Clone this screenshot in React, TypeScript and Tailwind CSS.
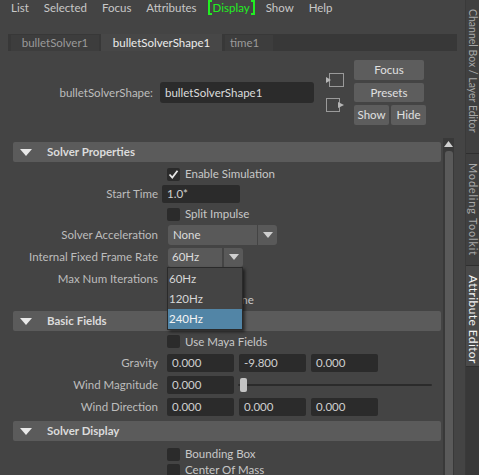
import React from 'react';

function Check({ checked, label }: { checked?: boolean; label: string }) {
  return (
    <div className="flex items-center ml-[9px]">
      <div className="w-[13px] h-[13px] rounded-[2px] bg-[#2b2b2b] flex items-center justify-center">
        {checked && (
          <svg width="11" height="11" viewBox="0 0 11 11">
            <polyline points="1.5,5.5 4.3,8.5 9.5,1.8" fill="none" stroke="#e6e6e6" strokeWidth="1.8" />
          </svg>
        )}
      </div>
      <span className="ml-[5px] text-[#c8c8c8]">{label}</span>
    </div>
  );
}

function Row({ label, h, children }: { label?: string; h: string; children?: React.ReactNode }) {
  return (
    <div className={`flex items-center ${h}`}>
      <div className="w-[145px] shrink-0 text-right text-[#bdbdbd]">{label}</div>
      {children}
    </div>
  );
}

function Field({ value, w }: { value?: string; w: string }) {
  return (
    <div className={`h-[18px] ${w} rounded-[2px] bg-[#2b2b2b] text-[#cfcfcf] pl-[5px] flex items-center`}>
      {value}
    </div>
  );
}

function Arrow() {
  return (
    <svg width="10" height="6" viewBox="0 0 10 6">
      <polygon points="0,0 10,0 5,6" fill="#cfcfcf" />
    </svg>
  );
}

function Header({ title }: { title: string }) {
  return (
    <div className="h-[20px] rounded-[2px] bg-[#5b5b5b] flex items-center">
      <svg width="12" height="7" viewBox="0 0 12 7" className="ml-[7px]">
        <polygon points="0,0 12,0 6,7" fill="#e8e8e8" />
      </svg>
      <span className="ml-[15px] font-bold text-[#dcdcdc]">{title}</span>
    </div>
  );
}

function SideTab({ children, active, h }: { children: React.ReactNode; active?: boolean; h: string }) {
  return (
    <div
      className={`${h} border-b border-[#2f2f2f] flex justify-center pt-[9px] ${
        active ? 'bg-[#4a4a4a] text-[#f4f4f4]' : 'bg-[#404040] text-[#a8a8a8]'
      }`}
    >
      {children}
    </div>
  );
}

export default function App() {
  return (
    <div className="relative w-[479px] h-[475px] overflow-hidden bg-[#444444] flex font-['Lato',sans-serif] text-[11.5px] leading-[14px]">
      {/* main editor column */}
      <div className="w-[465px] shrink-0 flex flex-col">
        {/* menu bar */}
        <div className="h-[17px] flex items-center gap-[15px] pl-[11px] text-[11.5px] text-[#c8c8c8]">
          <span>List</span>
          <span>Selected</span>
          <span>Focus</span>
          <span>Attributes</span>
          <span className="-mx-[4px] flex items-center text-[#22ee22]">
            <span className="w-[4px] h-[15px] border-l-2 border-t-2 border-b-2 border-[#22ee22]" />
            <span className="mx-[1px]">Display</span>
            <span className="w-[4px] h-[15px] border-r-2 border-t-2 border-b-2 border-[#22ee22]" />
          </span>
          <span>Show</span>
          <span>Help</span>
        </div>

        {/* node tabs */}
        <div className="mt-[19px] ml-[8px] w-[449px] h-[18px] bg-[#383838] flex items-end pl-[3px]">
          <div className="w-[88px] h-[16px] bg-[#3d3d3d] text-[#9a9a9a] flex items-center justify-center">bulletSolver1</div>
          <div className="ml-[2px] w-[121px] h-[17px] bg-[#474747] text-[#ececec] flex items-center justify-center">bulletSolverShape1</div>
          <div className="ml-[3px] w-[48px] h-[16px] bg-[#3d3d3d] text-[#9a9a9a] flex items-center pl-[5px]">time1</div>
        </div>

        {/* node name row */}
        <div className="mt-[9px] h-[66px] flex items-center">
          <div className="w-[153px] text-right text-[#bdbdbd]">bulletSolverShape:</div>
          <div className="ml-[7px] w-[154px] h-[21px] rounded-[3px] bg-[#2b2b2b] text-[#dcdcdc] flex items-center pl-[5px]">
            bulletSolverShape1
          </div>
          <div className="ml-[12px] w-[19px] flex flex-col gap-[10px]">
            <svg width="19" height="15" viewBox="0 0 19 15">
              <rect x="3.5" y="0.5" width="14" height="13" fill="none" stroke="#9a9a9a" />
              <polygon points="0,4 5,7 0,10" fill="#b5b5b5" />
            </svg>
            <svg width="19" height="15" viewBox="0 0 19 15">
              <rect x="0.5" y="0.5" width="13" height="13" fill="none" stroke="#9a9a9a" />
              <polygon points="12,4 18,7 12,10" fill="#b5b5b5" />
            </svg>
          </div>
          <div className="ml-[9px] self-start flex flex-col gap-[3px] text-[#e0e0e0]">
            <div className="w-[70px] h-[20px] rounded-[2px] bg-[#5d5d5d] flex items-center justify-center">Focus</div>
            <div className="w-[70px] h-[19px] rounded-[2px] bg-[#5d5d5d] flex items-center justify-center">Presets</div>
            <div className="flex gap-[2px]">
              <div className="w-[35px] h-[20px] rounded-[2px] bg-[#5d5d5d] flex items-center justify-center">Show</div>
              <div className="w-[35px] h-[20px] rounded-[2px] bg-[#5d5d5d] flex items-center justify-center">Hide</div>
            </div>
          </div>
        </div>

        {/* attribute scroll area */}
        <div className="mt-[13px] flex flex-1">
          <div className="ml-[13px] w-[428px] pt-[4px] flex flex-col">
            <Header title="Solver Properties" />
            <div className="pt-[3px] flex flex-col">
              <Row h="h-[18px]">
                <Check checked label="Enable Simulation" />
              </Row>
              <Row label="Start Time" h="h-[21px]">
                <div className="ml-[4px]">
                  <Field value="1.0*" w="w-[78px]" />
                </div>
              </Row>
              <Row h="h-[20px]">
                <Check label="Split Impulse" />
              </Row>
              <Row label="Solver Acceleration" h="h-[22px]">
                <div className="ml-[10px] flex gap-[1px]">
                  <div className="w-[89px] h-[20px] rounded-l-[3px] bg-[#595959] text-[#dcdcdc] flex items-center pl-[5px]">None</div>
                  <div className="w-[19px] h-[20px] rounded-r-[3px] bg-[#595959] flex items-center justify-center">
                    <Arrow />
                  </div>
                </div>
              </Row>
              <Row label="Internal Fixed Frame Rate" h="h-[22px]">
                <div className="ml-[10px] flex gap-[2px]">
                  <div className="w-[54px] h-[19px] rounded-l-[3px] bg-[#595959] text-[#dcdcdc] flex items-center pl-[4px]">60Hz</div>
                  <div className="w-[19px] h-[19px] rounded-r-[3px] bg-[#595959] flex items-center justify-center">
                    <Arrow />
                  </div>
                </div>
              </Row>
              <Row label="Max Num Iterations" h="h-[22px]">
                <div className="ml-[10px]">
                  <Field w="w-[70px]" />
                </div>
              </Row>
              <Row h="h-[19px]">
                <Check label="Ground Plane" />
              </Row>
            </div>

            <div className="mt-[2px]">
              <Header title="Basic Fields" />
            </div>
            <div className="flex flex-col">
              <Row h="h-[21px]">
                <Check label="Use Maya Fields" />
              </Row>
              <Row label="Gravity" h="h-[22px]">
                <div className="ml-[9px] flex gap-[5px]">
                  <Field value="0.000" w="w-[67px]" />
                  <Field value="-9.800" w="w-[67px]" />
                  <Field value="0.000" w="w-[67px]" />
                </div>
              </Row>
              <Row label="Wind Magnitude" h="h-[22px]">
                <div className="ml-[9px] flex items-center">
                  <Field value="0.000" w="w-[67px]" />
                  <div className="relative ml-[4px] w-[194px] h-[14px] flex items-center">
                    <div className="w-full h-[2px] rounded-full bg-[#2b2b2b]" />
                    <div className="absolute left-[2px] top-0 w-[7px] h-[14px] rounded-[2px] bg-[#c4c4c4]" />
                  </div>
                </div>
              </Row>
              <Row label="Wind Direction" h="h-[22px]">
                <div className="ml-[9px] flex gap-[5px]">
                  <Field value="0.000" w="w-[67px]" />
                  <Field value="0.000" w="w-[67px]" />
                  <Field value="0.000" w="w-[67px]" />
                </div>
              </Row>
            </div>

            <div className="mt-[3px]">
              <Header title="Solver Display" />
            </div>
            <div className="pt-[5px] flex flex-col">
              <Row h="h-[16px]">
                <Check label="Bounding Box" />
              </Row>
              <Row h="h-[16px]">
                <Check label="Center Of Mass" />
              </Row>
            </div>
          </div>

          {/* scrollbar */}
          <div className="ml-[2px] w-[11px] bg-[#393939] flex flex-col items-center">
            <svg width="9" height="6" viewBox="0 0 9 6" className="mt-[3px]">
              <polygon points="4.5,0 9,6 0,6" fill="#d0d0d0" />
            </svg>
            <div className="mt-[4px] w-[8px] flex-1 rounded-t-[3px] bg-[#5a5a5a]" />
          </div>
        </div>
      </div>

      {/* side tabs */}
      <div className="w-[14px] flex flex-col bg-[#383838] border-l border-[#3a3a3a]">
        <SideTab h="h-[154px]">
          <span className="[writing-mode:vertical-rl] text-[10.5px] leading-[14px]">Channel Box / Layer Editor</span>
        </SideTab>
        <SideTab h="h-[112px]">
          <span className="[writing-mode:vertical-rl] text-[11px] leading-[14px] tracking-[0.8px]">Modeling Toolkit</span>
        </SideTab>
        <SideTab active h="h-[101px]">
          <span className="[writing-mode:vertical-rl] text-[12px] leading-[14px] tracking-[0.4px]">Attribute Editor</span>
        </SideTab>
      </div>

      {/* open frame-rate dropdown */}
      <div className="absolute left-[167px] top-[267px] w-[76px] h-[63px] bg-[#444444] border border-[#2a2a2a] shadow-[2px_2px_3px_rgba(0,0,0,0.55)] text-[#d6d6d6] flex flex-col pt-[1px]">
        <div className="h-[20px] flex items-center pl-[1px]">60Hz</div>
        <div className="h-[20px] flex items-center pl-[1px]">120Hz</div>
        <div className="h-[20px] flex items-center pl-[1px] bg-[#5285a6] text-[#f4f4f4]">240Hz</div>
      </div>
    </div>
  );
}
